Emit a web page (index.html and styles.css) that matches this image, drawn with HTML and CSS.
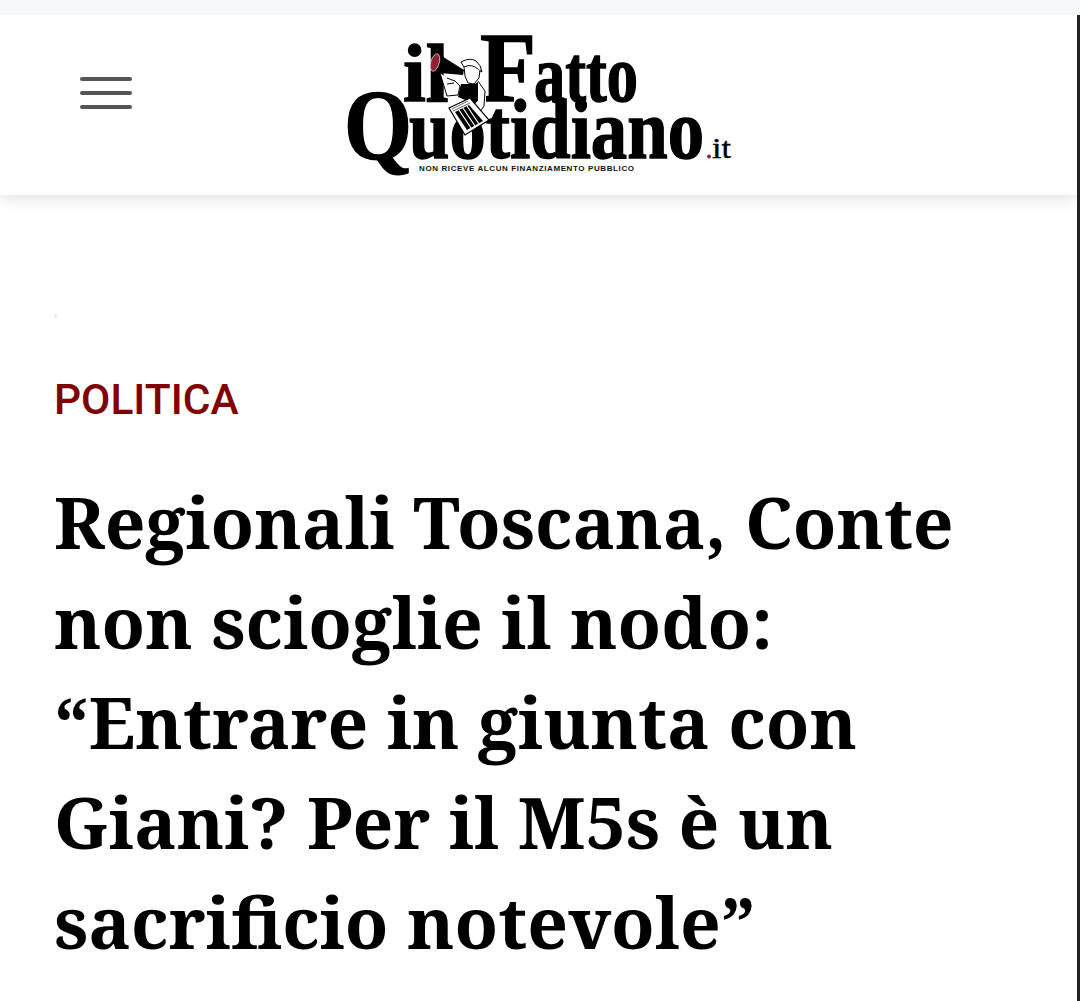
FILE: index.html
```html
<!DOCTYPE html>
<html lang="it">
<head>
    <meta charset="UTF-8">
    <meta name="viewport" content="width=device-width, initial-scale=1.0">
    <title>Regionali Toscana - il Fatto Quotidiano</title>
    <link rel="stylesheet" href="styles.css">
</head>
<body>
    <div class="top-strip"></div>
    <div class="page">
        <header class="site-header">
            <button class="menu-button" aria-label="Menu">
                <span></span>
                <span></span>
                <span></span>
            </button>
            <a href="#" class="logo">
                <svg class="logo-mark" viewBox="340 30 400 150" width="400" height="150">
                    <text class="logo-word" x="403" y="101" font-size="82">il</text>
                    <text class="logo-word" x="480" y="101" font-size="100" textLength="56" lengthAdjust="spacingAndGlyphs">F</text>
                    <text class="logo-word" x="534" y="101" font-size="80" textLength="104" lengthAdjust="spacingAndGlyphs">atto</text>
                    <text class="logo-word" x="344" y="158" font-size="100" textLength="68" lengthAdjust="spacingAndGlyphs">Q</text>
                    <text class="logo-word" x="409" y="158" font-size="85" textLength="295" lengthAdjust="spacingAndGlyphs">uotidiano</text>
                    <circle class="logo-dot" cx="709" cy="156.5" r="2"></circle>
                    <text class="logo-tld" x="712" y="158" font-size="29" textLength="19" lengthAdjust="spacingAndGlyphs">it</text>
                    <text class="logo-tag" x="419" y="171" font-size="8" textLength="215" lengthAdjust="spacing">NON RICEVE ALCUN FINANZIAMENTO PUBBLICO</text>
                    <!-- omino col megafono -->
                    <path class="fig-clear" d="M445 74 L447 98 L456 98 L459 104 L472 106 L478 116 L486 107 L486 92 L479 81 L482 70 L470 58 L460 62 L462 70 Z"></path>
                    <path d="M437 53 L464 70 L463 75 L440 73 L431 70 Z"></path>
                    <ellipse class="logo-red" cx="435" cy="62.5" rx="4.2" ry="9" transform="rotate(16 435 62.5)"></ellipse>
                    <path class="fig-line" d="M461 62 Q470 57 476 61 Q481 65 482 72 L479 70 Q472 63 464 67 Z"></path>
                    <path class="fig-line" d="M464 67 L465 76 L468 83 L474 84 L479 78 L480 70"></path>
                    <path class="fig-line" d="M440 73 L447 96 L458 95 L460 86 L455 81 L447 78 M447 84 L454 83"></path>
                    <path d="M461 84 L468 84 L475 84 L478 82 L480 98 L475 104 L458 97 Z"></path>
                    <path class="fig-line" d="M478 81 L485 91 L484 106 L478 115"></path>
                    <path class="fig-paper" d="M449 108 L470 98 L489 120 L465 135 Z"></path>
                    <path d="M455 112 L469 105 L483 121 L467 130 Z"></path>
                    <path class="fig-stripes" d="M459 110 L471 128 M463 108 L475 126 M467 106 L479 124"></path>
                    <path class="fig-thin" d="M452 109 L468 101 M453 111 L470 103"></path>
                </svg>
            </a>
        </header>

        <main class="article">
            <div class="ad-dot"></div>
            <div class="category">POLITICA</div>
            <h1 class="headline">Regionali Toscana, Conte non scioglie il nodo: “Entrare in giunta con Giani? Per il M5s è un sacrificio notevole”</h1>
        </main>
    </div>
</body>
</html>
```

FILE: styles.css
```css
/* --- General --- */
html, body {
    margin: 0;
    padding: 0;
    height: 100%;
    overflow: hidden;
}
body {
    background-color: #fff;
    color: #000;
    font-family: 'Roboto', sans-serif;
}
.top-strip {
    height: 15px;
    background-color: #f7f8fa;
}
.page {
    height: calc(100% - 15px);
    border-right: 3px solid #222;
    box-sizing: border-box;
}

/* --- Header --- */
.site-header {
    display: flex;
    align-items: center;
    height: 180px;
    padding-left: 80px;
    background-color: #fff;
    box-shadow: 0 3px 14px rgba(0, 0, 0, 0.13);
    clip-path: inset(0 0 -30px 0);
}
.menu-button {
    display: flex;
    flex-direction: column;
    gap: 10px;
    width: 52px;
    padding: 0;
    margin-top: -24px;
    border: 0;
    background: none;
}
.menu-button span {
    display: block;
    height: 4px;
    border-radius: 2px;
    background-color: #555;
}
.logo {
    display: block;
    margin-left: 208px;
}
.logo-mark {
    display: block;
}
.logo-word {
    font-family: 'Liberation Serif', serif;
    font-weight: 700;
    fill: #000;
    stroke: #000;
    stroke-width: 1.4px;
}
.logo-tld {
    font-family: 'Liberation Serif', serif;
    font-weight: 400;
    fill: #000;
    stroke: #000;
    stroke-width: 0.4px;
}
.logo-tag {
    font-family: 'Liberation Sans', sans-serif;
    font-weight: 700;
    fill: #111;
}
.logo-dot { fill: #8c2232; }
.logo-red { fill: #8c2232; stroke: #fff; stroke-width: 0.6px; }
.fig-clear { fill: #fff; }
.fig-line { fill: #fff; stroke: #000; stroke-width: 1px; }
.fig-paper { fill: #fff; stroke: #000; stroke-width: 1.2px; }
.fig-stripes { fill: none; stroke: #fff; stroke-width: 1.2px; }
.fig-thin { fill: none; stroke: #000; stroke-width: 0.6px; }

/* --- Article --- */
.article {
    padding: 119px 40px 0 54px;
}
.ad-dot {
    width: 3px;
    height: 4px;
    background-color: #eee;
}
.category {
    margin-top: 57px;
    font-size: 42.5px;
    line-height: 50px;
    font-weight: 500;
    color: #800000;
}
.headline {
    margin: 47px 0 0;
    font-family: 'Noto Serif', 'DejaVu Serif Condensed', 'DejaVu Serif', serif;
    font-size: 71.25px;
    line-height: 100px;
    font-weight: 700;
    color: #000;
}
```
